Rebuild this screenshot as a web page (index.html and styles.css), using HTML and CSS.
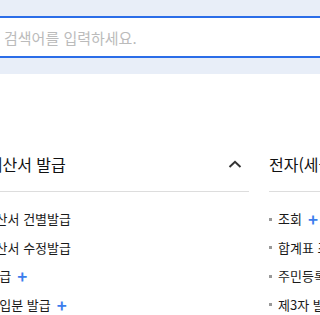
FILE: index.html
```html
<!DOCTYPE html>
<html lang="ko">
<head>
    <meta charset="UTF-8">
    <meta name="viewport" content="width=device-width, initial-scale=1.0">
    <title>전자(세금)계산서 메뉴</title>
    <link rel="stylesheet" href="styles.css">
</head>
<body>
    <div class="search-band">
        <div class="search-box">
            <input type="text" placeholder="검색어를 입력하세요.">
        </div>
    </div>

    <div class="menu">
        <div class="menu-col left">
            <div class="menu-title">
                <span>전자(세금)계산서 발급</span>
                <svg class="caret" width="14" height="8" viewBox="0 0 14 8"><path d="M1.5 7 L7 1.8 L12.5 7" fill="none" stroke="#333" stroke-width="2"/></svg>
            </div>
            <ul class="menu-list">
                <li>전자(세금)계산서 건별발급</li>
                <li>전자(세금)계산서 수정발급</li>
                <li>일괄(엑셀) 발급<span class="plus">+</span></li>
                <li>대리(위탁) 매입분 발급<span class="plus">+</span></li>
            </ul>
        </div>
        <div class="menu-col right">
            <div class="menu-title">
                <span>전자(세금)계산서 조회</span>
            </div>
            <ul class="menu-list">
                <li>조회<span class="plus">+</span></li>
                <li>합계표 조회</li>
                <li>주민등록번호 수취분 조회</li>
                <li>제3자 발급사실 조회</li>
            </ul>
        </div>
    </div>
</body>
</html>
```

FILE: styles.css
```css
body { margin: 0; font-family: "Noto Sans CJK KR", "Noto Sans", sans-serif; color: #222; overflow: hidden; }
.search-band { background: #e8eef8; padding: 16px 0; }
.search-box { margin: 0 -10px; background: #fff; border: 2px solid #2b6de8; height: 38px; display: flex; align-items: center; }
.search-box input { border: none; outline: none; width: 100%; padding: 0 0 0 12px; font-family: inherit; font-size: 15px; background: transparent; }
.search-box input::placeholder { color: #bbb; }
.menu { display: flex; gap: 20px; margin-left: -82px; padding-top: 78px; width: 700px; }
.menu-col.left { width: 331px; }
.menu-col.right { width: 331px; }
.menu-title { display: flex; justify-content: space-between; align-items: center; font-size: 16px; line-height: 24px; padding: 0 7px 15px 0; border-bottom: 1px solid #ddd; color: #111; }
.menu-list { list-style: none; margin: 0; padding: 13px 0 0; }
.menu-list li { font-size: 13px; line-height: 28.5px; color: #1a1a1a; white-space: nowrap; display: flex; align-items: center; }
.menu-list li::before { content: ""; width: 3px; height: 3px; background: #999; margin-right: 6px; flex: none; }
.plus { color: #3b7ded; font-weight: bold; font-size: 17px; margin-left: 6px; }
```
